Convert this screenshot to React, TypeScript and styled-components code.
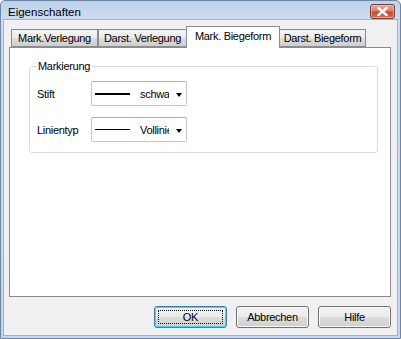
import styled, { createGlobalStyle } from 'styled-components';

const GlobalStyle = createGlobalStyle`
  html, body {
    margin: 0;
    padding: 0;
    background: #ffffff;
  }
  body {
    font-family: 'Liberation Sans', Arial, sans-serif;
    font-size: 11px;
    color: #000;
  }
`;

const Window = styled.div`
  box-sizing: border-box;
  width: 401px;
  height: 339px;
  display: flex;
  flex-direction: column;
  border: 1px solid #6d85a6;
  border-radius: 5px 5px 0 0;
  background: linear-gradient(#bfd3ed 0px, #cddcf0 20px, #c4d6ee 100%);
  padding: 0 2px 2px 2px;
`;

const TitleBar = styled.div`
  height: 20px;
  display: flex;
  align-items: center;
  justify-content: space-between;
  padding: 0 3px 0 5px;
`;

const Title = styled.span`
  font-size: 11.5px;
  color: #000;
  padding-top: 3px;
`;

const CloseButton = styled.div`
  box-sizing: border-box;
  width: 25px;
  height: 15px;
  margin-top: 3px;
  border: 1px solid #7a3b32;
  border-radius: 3px;
  background: linear-gradient(#e5a798 0%, #d4806f 45%, #c24a36 55%, #d2734f 100%);
  display: flex;
  align-items: center;
  justify-content: center;
  box-shadow: inset 0 0 0 1px rgba(255, 220, 210, 0.5);
`;

const Client = styled.div`
  flex: 1;
  display: flex;
  flex-direction: column;
  background: #f0f0f0;
  border: 1px solid #a3b2c7;
  padding: 6px 6px 7px 5px;
`;

const TabStrip = styled.div`
  display: flex;
  align-items: flex-end;
  height: 21px;
  padding-left: 2px;
`;

const Tab = styled.div<{ $active?: boolean; $w: number }>`
  box-sizing: border-box;
  width: ${(p) => p.$w}px;
  height: ${(p) => (p.$active ? 22 : 18)}px;
  border: 1px solid #898c95;
  border-bottom: ${(p) => (p.$active ? 'none' : '1px solid #898c95')};
  margin-left: ${(p) => (p.$active ? '-1px' : '0')};
  margin-right: ${(p) => (p.$active ? '-1px' : '0')};
  margin-bottom: ${(p) => (p.$active ? '-1px' : '0')};
  position: relative;
  z-index: ${(p) => (p.$active ? 1 : 0)};
  background: ${(p) =>
    p.$active ? '#ffffff' : 'linear-gradient(#f3f3f3 0%, #ebebeb 50%, #dddddd 50%, #cfcfcf 100%)'};
  display: flex;
  justify-content: center;
  align-items: ${(p) => (p.$active ? 'flex-start' : 'center')};
  padding-top: ${(p) => (p.$active ? '3px' : '0')};
  letter-spacing: -0.3px;
  white-space: nowrap;
  & + & {
    border-left: ${(p) => (p.$active ? '1px solid #898c95' : 'none')};
  }
`;

const TabPanel = styled.div`
  box-sizing: border-box;
  width: 382px;
  height: 250px;
  border: 1px solid #898c95;
  background: #ffffff;
  padding: 12px 12px 0 19px;
`;

const GroupBox = styled.fieldset`
  box-sizing: border-box;
  width: 349px;
  height: 93px;
  margin: 0;
  border: 1px solid #d5dfe5;
  border-radius: 3px;
  padding: 9px 0 0 7px;
  display: flex;
  flex-direction: column;
  gap: 11px;
`;

const Legend = styled.legend`
  padding: 0 1px;
  letter-spacing: -0.3px;
  color: #000;
`;

const FieldRow = styled.div`
  display: flex;
  align-items: center;
`;

const FieldLabel = styled.span`
  width: 54px;
  letter-spacing: -0.3px;
`;

const Combo = styled.div`
  box-sizing: border-box;
  width: 96px;
  height: 25px;
  border: 1px solid #c3c6cc;
  border-top-color: #abadb3;
  border-radius: 2px;
  background: #ffffff;
  display: flex;
  align-items: center;
  padding-left: 3px;
`;

const LineSample = styled.div<{ $thick: number }>`
  width: 35px;
  height: ${(p) => p.$thick}px;
  background: #000;
  margin-right: 10px;
`;

const ComboText = styled.span`
  width: 29px;
  overflow: hidden;
  white-space: nowrap;
  letter-spacing: -0.3px;
`;

const Arrow = styled.div`
  width: 0;
  height: 0;
  margin-left: 7px;
  margin-top: 3px;
  border-left: 3.5px solid transparent;
  border-right: 3.5px solid transparent;
  border-top: 4px solid #000;
`;

const ButtonRow = styled.div`
  display: flex;
  justify-content: flex-end;
  gap: 9px;
  margin-top: 9px;
`;

const Button = styled.div<{ $default?: boolean }>`
  box-sizing: border-box;
  width: 73px;
  height: 22px;
  border: 1px solid ${(p) => (p.$default ? '#3c7fb1' : '#707070')};
  border-radius: 3px;
  background: linear-gradient(#f2f2f2 0%, #ebebeb 50%, #dddddd 50%, #cfcfcf 100%);
  box-shadow: ${(p) => (p.$default ? 'inset 0 0 0 1px #48d2fa' : 'inset 0 0 0 1px #fcfcfc')};
  display: flex;
  align-items: center;
  justify-content: center;
  letter-spacing: -0.3px;
  position: relative;
`;

const FocusRing = styled.div`
  position: absolute;
  inset: 3px;
  border: 1px dotted #000;
`;

export default function App() {
  return (
    <>
      <GlobalStyle />
      <Window>
        <TitleBar>
          <Title>Eigenschaften</Title>
          <CloseButton>
            <svg width="11" height="9" viewBox="0 0 11 9">
              <path d="M1.5 1 L9.5 8 M9.5 1 L1.5 8" stroke="#ffffff" strokeWidth="2.4" strokeLinecap="square" />
            </svg>
          </CloseButton>
        </TitleBar>
        <Client>
          <TabStrip>
            <Tab $w={87}>Mark.Verlegung</Tab>
            <Tab $w={89}>Darst. Verlegung</Tab>
            <Tab $w={94} $active>
              Mark. Biegeform
            </Tab>
            <Tab $w={87}>Darst. Biegeform</Tab>
          </TabStrip>
          <TabPanel>
            <GroupBox>
              <Legend>Markierung</Legend>
              <FieldRow>
                <FieldLabel>Stift</FieldLabel>
                <Combo>
                  <LineSample $thick={2} />
                  <ComboText>schwarz</ComboText>
                  <Arrow />
                </Combo>
              </FieldRow>
              <FieldRow>
                <FieldLabel>Linientyp</FieldLabel>
                <Combo>
                  <LineSample $thick={1} />
                  <ComboText>Vollinie</ComboText>
                  <Arrow />
                </Combo>
              </FieldRow>
            </GroupBox>
          </TabPanel>
          <ButtonRow>
            <Button $default>
              OK
              <FocusRing />
            </Button>
            <Button>Abbrechen</Button>
            <Button>Hilfe</Button>
          </ButtonRow>
        </Client>
      </Window>
    </>
  );
}
